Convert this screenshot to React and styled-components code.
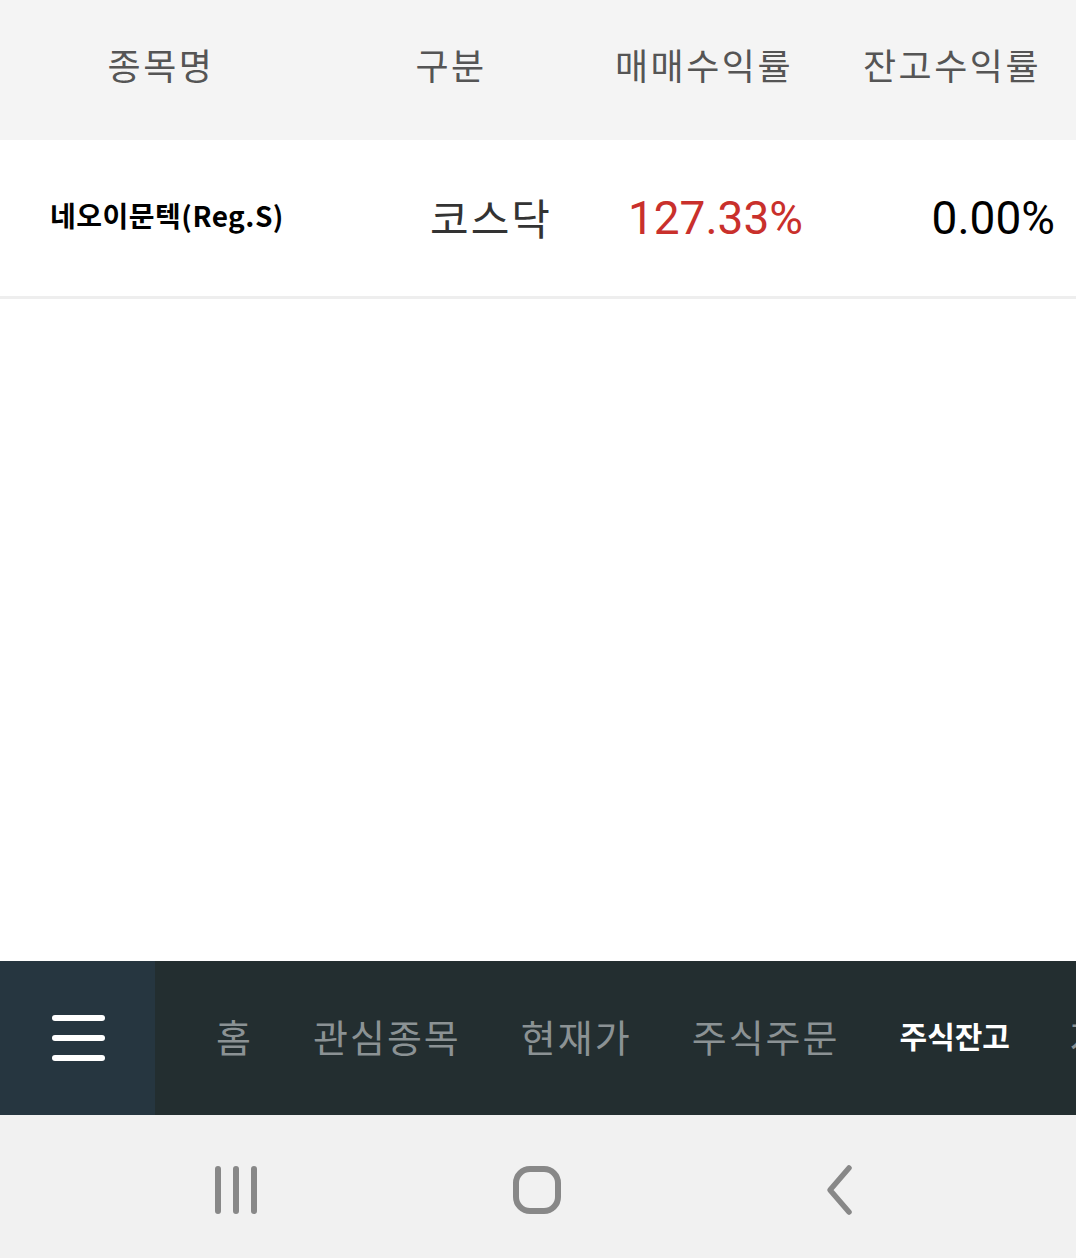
import React from "react";
import styled, { createGlobalStyle } from "styled-components";

const Global = createGlobalStyle`
  html, body { margin: 0; padding: 0; background: #ffffff; }
  body { font-family: "Noto Sans CJK KR", "Noto Sans", sans-serif; }
  * { box-sizing: border-box; }
`;

const Page = styled.div`
  width: 1076px;
  height: 1258px;
  display: flex;
  flex-direction: column;
  background: #ffffff;
  overflow: hidden;
`;

const COLS = "322px 258px 248px 248px";

const HeaderRow = styled.div`
  display: grid;
  grid-template-columns: ${COLS};
  height: 140px;
  flex-shrink: 0;
  background: #f4f4f4;
  align-items: center;
`;

const HeaderCell = styled.div`
  text-align: center;
  font-family: "Noto Sans CJK KR", sans-serif;
  font-size: 36px;
  color: #555555;
  letter-spacing: 2.5px;
  padding-bottom: 12px;
`;

const DataRow = styled.div`
  display: grid;
  grid-template-columns: ${COLS};
  height: 159px;
  flex-shrink: 0;
  align-items: center;
  border-bottom: 3px solid #eeeeee;
  background: #ffffff;
`;

const NameCell = styled.div`
  padding-left: 50px;
  font-family: "Noto Sans CJK KR", sans-serif;
  font-weight: 700;
  font-size: 28px;
  color: #000000;
  letter-spacing: 0.5px;
  padding-bottom: 6px;
`;

const ValueCell = styled.div`
  text-align: right;
  padding-right: ${(p) => p.$pr}px;
  font-family: ${(p) => (p.$num ? "Roboto, 'Noto Sans', sans-serif" : "'Noto Sans CJK KR', sans-serif")};
  font-size: ${(p) => (p.$num ? 46 : 42)}px;
  letter-spacing: ${(p) => (p.$num ? 0 : 2)}px;
  color: ${(p) => p.$color || "#333333"};
  padding-bottom: ${(p) => (p.$num ? 0 : 4)}px;
`;

const Body = styled.div`
  flex: 1;
  background: #ffffff;
`;

const NavBar = styled.div`
  height: 154px;
  flex-shrink: 0;
  display: flex;
  background: #232e30;
`;

const MenuButton = styled.div`
  width: 155px;
  background: #263640;
  display: flex;
  flex-direction: column;
  align-items: center;
  justify-content: center;
  gap: 14px;
  padding-left: 2px;
`;

const MenuLine = styled.span`
  display: block;
  width: 53px;
  height: 6px;
  border-radius: 3px;
  background: #ffffff;
`;

const Tabs = styled.div`
  flex: 1;
  display: flex;
  align-items: center;
  gap: 60px;
  padding-left: 61px;
  overflow: hidden;
  white-space: nowrap;
`;

const Tab = styled.span`
  font-family: "Noto Sans CJK KR", sans-serif;
  font-size: ${(p) => (p.$active ? 30 : 38)}px;
  letter-spacing: ${(p) => (p.$active ? 0 : 2)}px;
  font-weight: ${(p) => (p.$active ? 700 : 400)};
  color: ${(p) => (p.$active ? "#ffffff" : "#8b9294")};
  padding-bottom: 6px;
  flex-shrink: 0;
`;

const SystemBar = styled.div`
  height: 143px;
  flex-shrink: 0;
  background: #f1f1f1;
  display: flex;
  align-items: center;
  padding-left: 212px;
`;

const SysIcon = styled.svg`
  display: block;
  flex-shrink: 0;
  margin-top: 6px;
  margin-left: ${(p) => p.$ml || 0}px;
`;

const tabs = ["홈", "관심종목", "현재가", "주식주문", "주식잔고", "자산현황"];

export default function App() {
  return (
    <Page>
      <Global />
      <HeaderRow>
        <HeaderCell>종목명</HeaderCell>
        <HeaderCell>구분</HeaderCell>
        <HeaderCell>매매수익률</HeaderCell>
        <HeaderCell>잔고수익률</HeaderCell>
      </HeaderRow>
      <DataRow>
        <NameCell>네오이문텍(Reg.S)</NameCell>
        <ValueCell $pr={28}>코스닥</ValueCell>
        <ValueCell $num $pr={25} $color="#c9302c">127.33%</ValueCell>
        <ValueCell $num $pr={21} $color="#000000">0.00%</ValueCell>
      </DataRow>
      <Body />
      <NavBar>
        <MenuButton>
          <MenuLine />
          <MenuLine />
          <MenuLine />
        </MenuButton>
        <Tabs>
          {tabs.map((t) => (
            <Tab key={t} $active={t === "주식잔고"}>
              {t}
            </Tab>
          ))}
        </Tabs>
      </NavBar>
      <SystemBar>
        <SysIcon width="48" height="52" viewBox="0 0 48 52">
          <g stroke="#888888" strokeWidth="6" strokeLinecap="round">
            <line x1="6" y1="5" x2="6" y2="47" />
            <line x1="24" y1="5" x2="24" y2="47" />
            <line x1="42" y1="5" x2="42" y2="47" />
          </g>
        </SysIcon>
        <SysIcon $ml={251} width="52" height="52" viewBox="0 0 52 52">
          <rect x="5" y="5" width="42" height="42" rx="14" fill="none" stroke="#888888" strokeWidth="6" />
        </SysIcon>
        <SysIcon $ml={259} width="40" height="52" viewBox="0 0 40 52">
          <polyline points="27,4 8,26 27,48" fill="none" stroke="#888888" strokeWidth="5.5" strokeLinecap="round" strokeLinejoin="round" />
        </SysIcon>
      </SystemBar>
    </Page>
  );
}
